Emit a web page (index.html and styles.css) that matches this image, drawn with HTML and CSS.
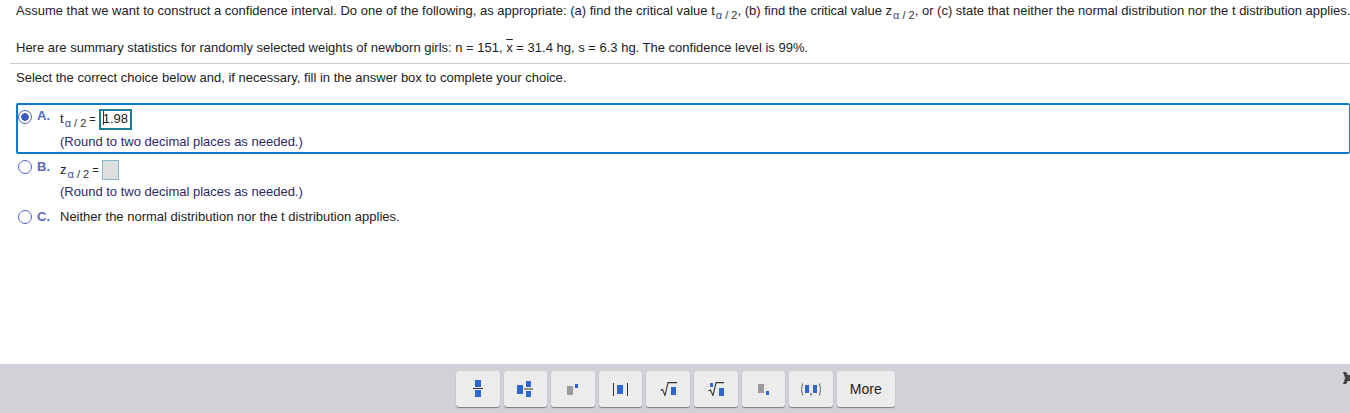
FILE: index.html
```html
<!DOCTYPE html>
<html lang="en">
<head>
    <meta charset="UTF-8">
    <meta name="viewport" content="width=device-width, initial-scale=1.0">
    <title>Confidence Interval Question</title>
    <link rel="stylesheet" href="styles.css">
</head>
<body>
    <div class="page">
        <div class="question">
            <p class="intro">Assume that we want to construct a confidence interval. Do one of the following, as appropriate: (a) find the critical value t<span class="sub"><span class="alpha">α</span> / 2</span>, (b) find the critical value z<span class="sub"><span class="alpha">α</span> / 2</span>, or (c) state that neither the normal distribution nor the t distribution applies.</p>
            <p class="stats">Here are summary statistics for randomly selected weights of newborn girls: n = 151, <span class="xbar">x</span> = 31.4 hg, s = 6.3 hg. The confidence level is 99%.</p>
            <p class="prompt">Select the correct choice below and, if necessary, fill in the answer box to complete your choice.</p>
        </div>

        <div class="choices">
            <div class="choice selected">
                <span class="radio checked"></span>
                <span class="letter">A.</span>
                <div class="body">
                    <div class="formula">t<span class="sub"><span class="alpha">α</span> / 2</span><span class="eq">=</span><span class="answer filled"><span class="caret"></span>1.98</span></div>
                    <div class="hint">(Round to two decimal places as needed.)</div>
                </div>
            </div>
            <div class="choice">
                <span class="radio"></span>
                <span class="letter">B.</span>
                <div class="body">
                    <div class="formula">z<span class="sub"><span class="alpha">α</span> / 2</span><span class="eq">=</span><span class="answer"></span></div>
                    <div class="hint">(Round to two decimal places as needed.)</div>
                </div>
            </div>
            <div class="choice">
                <span class="radio"></span>
                <span class="letter">C.</span>
                <div class="body plain">Neither the normal distribution nor the t distribution applies.</div>
            </div>
        </div>

        <div class="toolbar">
            <div class="tools">
                <button class="tool">
                    <svg width="10" height="18" viewBox="0 0 10 18"><rect x="2" y="0" width="6" height="7" fill="#2e66d4"/><rect x="0" y="8" width="10" height="1" fill="#333"/><rect x="2" y="10" width="6" height="7" fill="#2e66d4"/></svg>
                </button>
                <button class="tool">
                    <svg width="16" height="16" viewBox="0 0 16 16"><rect x="0" y="4" width="6" height="9" fill="#2e66d4"/><rect x="9" y="0" width="5" height="6" fill="#2e66d4"/><rect x="7" y="7.5" width="9" height="1" fill="#333"/><rect x="9" y="10" width="5" height="6" fill="#2e66d4"/></svg>
                </button>
                <button class="tool">
                    <svg width="11" height="11" viewBox="0 0 11 11"><rect x="0" y="2" width="6" height="9" fill="#9a9a9a"/><rect x="8" y="0" width="3" height="4" fill="#2e66d4"/></svg>
                </button>
                <button class="tool">
                    <svg width="15" height="13" viewBox="0 0 15 13"><rect x="0" y="0" width="1" height="13" fill="#333"/><rect x="4" y="2" width="6" height="9" fill="#2e66d4"/><rect x="14" y="0" width="1" height="13" fill="#333"/></svg>
                </button>
                <button class="tool">
                    <svg width="17" height="14" viewBox="0 0 17 14"><path d="M0.5 8.5 L2.5 7.5 L5 13.5 L8 0.6 H17" fill="none" stroke="#333" stroke-width="1.1"/><rect x="11" y="5" width="5" height="8" fill="#2e66d4"/></svg>
                </button>
                <button class="tool">
                    <svg width="16" height="14" viewBox="0 0 16 14"><rect x="2" y="1" width="3" height="4" fill="#2e66d4"/><path d="M0.5 9 L2.5 8 L5 13.5 L8 0.6 H16" fill="none" stroke="#333" stroke-width="1.1"/><rect x="11" y="6" width="5" height="8" fill="#2e66d4"/></svg>
                </button>
                <button class="tool">
                    <svg width="11" height="11" viewBox="0 0 11 11"><rect x="0" y="0" width="6" height="9" fill="#9a9a9a"/><rect x="8" y="7" width="3" height="4" fill="#2e66d4"/></svg>
                </button>
                <button class="tool">
                    <svg width="22" height="13" viewBox="0 0 22 13"><path d="M2.5 0.5 Q0.5 6.5 2.5 12.5 M19.5 0.5 Q21.5 6.5 19.5 12.5" fill="none" stroke="#555" stroke-width="0.9"/><rect x="5" y="2" width="4" height="8" fill="#2e66d4"/><rect x="13" y="2" width="4" height="8" fill="#2e66d4"/><rect x="10.5" y="10" width="1" height="2.5" fill="#333"/></svg>
                </button>
                <button class="tool more">More</button>
            </div>
            <span class="close"></span>
        </div>
    </div>
</body>
</html>
```

FILE: styles.css
```css
* {
    box-sizing: border-box;
}
body {
    margin: 0;
    font-family: "Liberation Sans", Arial, sans-serif;
    font-size: 13px;
    color: #222;
    background-color: #ffffff;
}
.page {
    display: flex;
    flex-direction: column;
    height: 413px;
    overflow: hidden;
}
.question {
    padding: 4px 0 0 10px;
}
.question p {
    margin: 0;
    padding-left: 6px;
    line-height: 14px;
    white-space: nowrap;
}
.question .stats {
    margin-top: 23px;
    padding-bottom: 8px;
    border-bottom: 1px solid #c9ccd6;
}
.question .prompt {
    margin-top: 7px;
}
.sub {
    font-size: 11px;
    position: relative;
    top: 4px;
    margin-left: 1px;
    color: #333;
}
.alpha {
    color: #3a4a8c;
}
.xbar {
    text-decoration: overline;
}
.choices {
    flex: 1;
    margin-top: 18px;
    padding-left: 16px;
}
.choice {
    display: flex;
    height: 50px;
    padding-top: 3px;
    border: 2px solid transparent;
    border-right-width: 1px;
}
.choice.selected {
    height: 51px;
    border-color: #0f7ac6;
    border-radius: 2px;
}
.radio {
    width: 14px;
    height: 14px;
    margin: 1px 5px 0 0;
    border: 1px solid #4a63c8;
    border-radius: 50%;
    background-color: #fff;
}
.radio.checked {
    margin-top: 2px;
    background: radial-gradient(circle, #3d57c4 0 3.5px, #fff 4px);
}
.letter {
    width: 23px;
    margin-top: 1px;
    font-weight: bold;
    color: #5b6abf;
    line-height: 14px;
}
.formula {
    display: flex;
    align-items: flex-start;
    height: 25px;
    padding-top: 4px;
    line-height: 14px;
    white-space: pre;
}
.selected .formula {
    height: 26px;
}
.eq {
    margin: 0 3px;
    font-size: 11px;
}
.answer {
    width: 17px;
    height: 20px;
    margin-top: -3px;
    border: 1px solid #7fb9d3;
    background-color: #dedede;
}
.answer.filled {
    width: 33px;
    height: 21px;
    border: 2px solid #1d7f96;
    background-color: #fff;
    line-height: 16px;
    padding-left: 2px;
}
.caret {
    display: inline-block;
    width: 1px;
    height: 14px;
    background-color: #333;
    vertical-align: -2px;
    margin-right: -1px;
}
.hint {
    line-height: 16px;
    color: #2b2b6b;
}
.plain {
    margin-top: 1px;
    line-height: 14px;
}
.toolbar {
    position: relative;
    height: 49px;
    padding: 7px 0 0 456px;
    background-color: #d0d2d7;
}
.tools {
    display: flex;
    gap: 4px;
}
.tool {
    display: flex;
    align-items: center;
    justify-content: center;
    width: 43.6px;
    height: 36px;
    padding: 0;
    border: none;
    border-radius: 3px;
    background-color: #ececec;
    box-shadow: 0 1px 1px #7d7d7d;
    font-family: inherit;
}
.more {
    width: 58px;
    font-size: 14px;
    color: #222;
}
.close {
    position: absolute;
    right: 0;
    top: 8px;
    width: 7px;
    height: 12px;
    background-color: #444;
    clip-path: polygon(0 0, 45% 0, 70% 25%, 100% 25%, 100% 75%, 70% 75%, 45% 100%, 0 100%, 30% 50%);
}
```
